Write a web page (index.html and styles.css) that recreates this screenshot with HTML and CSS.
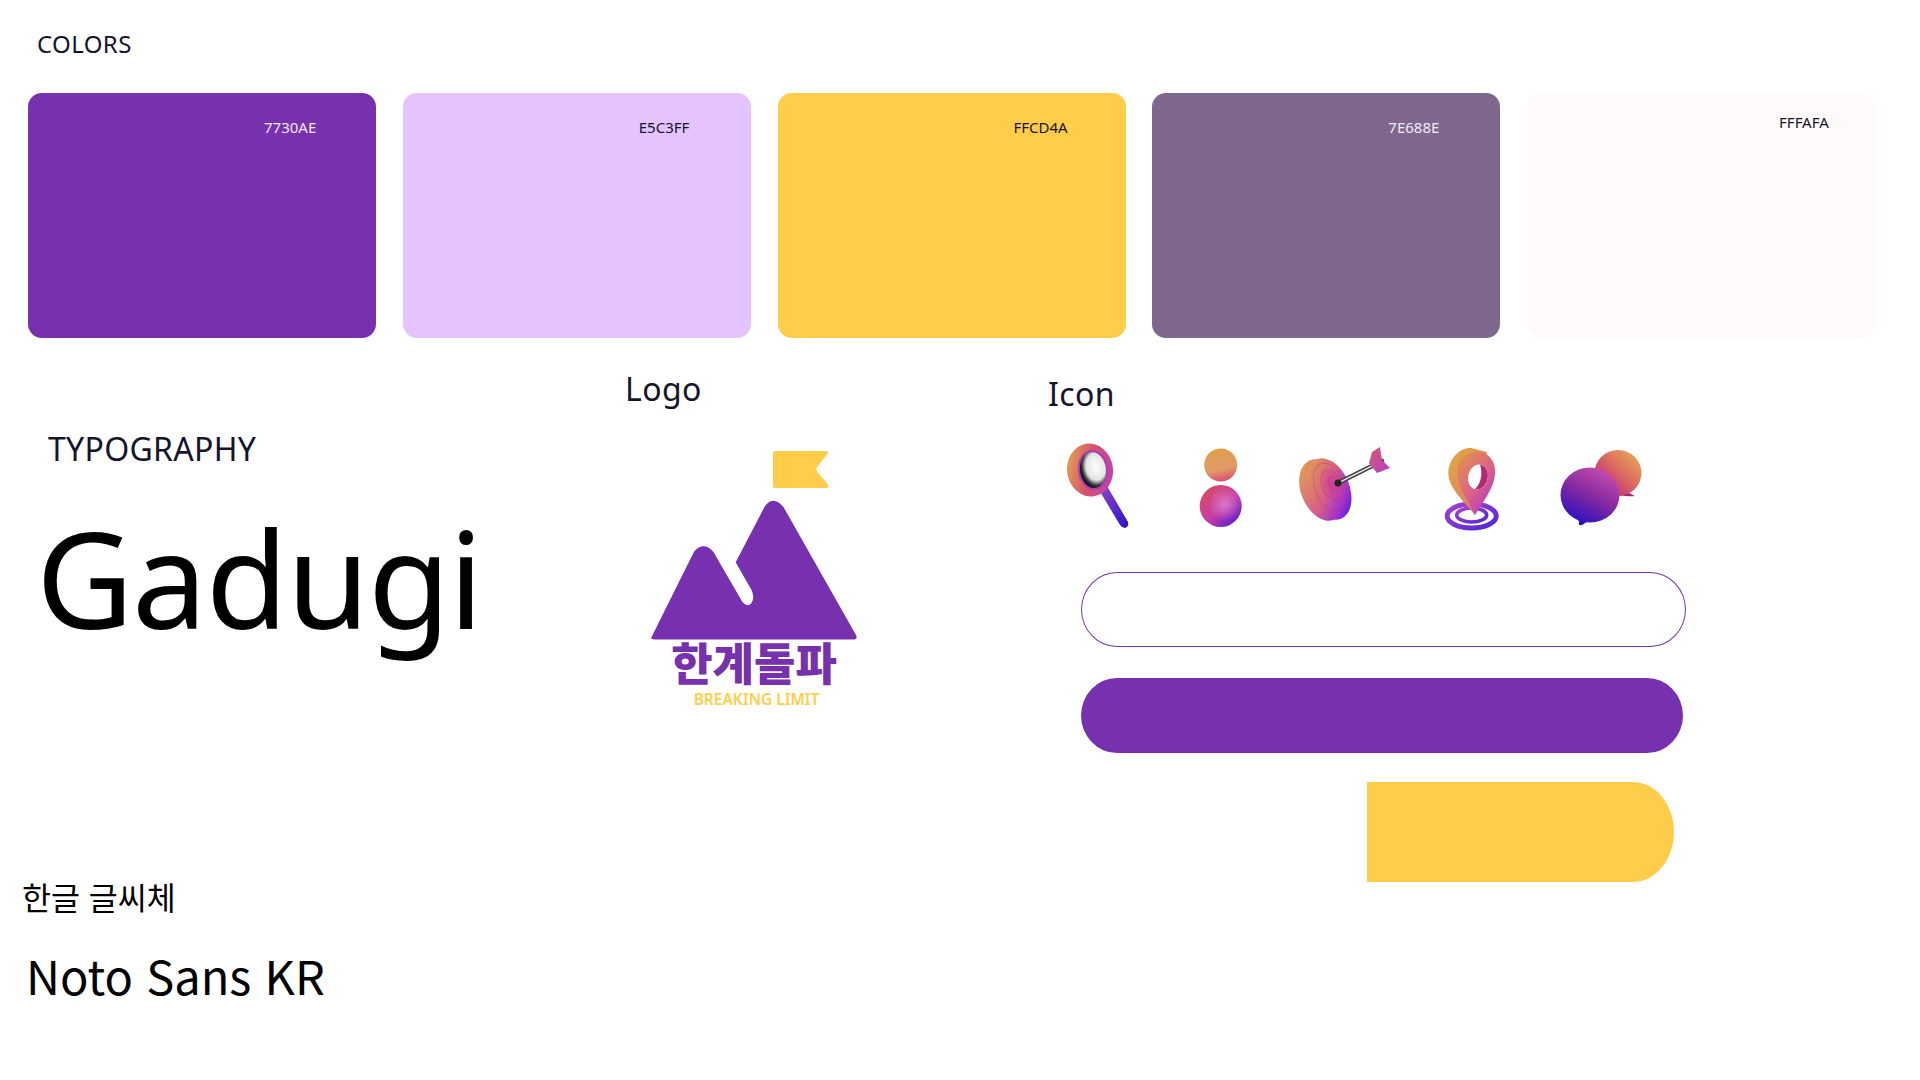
FILE: index.html
```html
<!DOCTYPE html>
<html lang="ko">

<head>
    <meta charset="UTF-8">
    <title>Style Guide</title>
    <link rel="stylesheet" href="styles.css">
</head>

<body>
    <section class="colors">
        <h2 class="colors-title">COLORS</h2>
        <div class="swatches">
            <div class="swatch purple"><span class="code light">7730AE</span></div>
            <div class="swatch lilac"><span class="code">E5C3FF</span></div>
            <div class="swatch yellow"><span class="code">FFCD4A</span></div>
            <div class="swatch grey"><span class="code light">7E688E</span></div>
            <div class="swatch snow"><span class="code raised">FFFAFA</span></div>
        </div>
    </section>

    <section class="lower">
        <div class="type-col">
            <h2 class="type-title">TYPOGRAPHY</h2>
            <div class="type-big">Gadugi</div>
            <div class="type-kr-label">한글 글씨체</div>
            <div class="type-kr">Noto Sans KR</div>
        </div>

        <div class="logo-col">
            <h2 class="heading">Logo</h2>
            <div class="logo">
                <svg class="logo-mark" viewBox="0 0 206 189" width="206" height="189">
                    <path fill="#FFCD4A" d="M124 0H175Q178.500 0 176.500 3L166 16Q164.500 18.300 166 20.600L176.500 33Q178.500 37 175 37H124Q122 37 122 35V2Q122 0 124 0Z"/>
                    <path fill="#7730AE" d="M0.700 185.700L43 100.700Q52.300 90 62.300 100.700L91.300 150.700Q96 157 100.500 152Q104 147 100.500 139L84.700 111.300L114 55Q122.300 44 132.300 55.700L205 184Q207 188.500 203 188.500H3Q-1 188.500 0.700 185.700Z"/>
                </svg>
                <div class="logo-kr">한계돌파</div>
                <div class="logo-en">BREAKING LIMIT</div>
            </div>
        </div>

        <div class="icon-col">
            <h2 class="heading icon-heading">Icon</h2>
            <div class="icons">
                <svg class="icon" viewBox="0 0 100 100" width="100" height="100">
                    <defs>
                        <linearGradient id="ring" x1="0" y1="0.3" x2="1" y2="0.7">
                            <stop offset="0" stop-color="#E4A050"/>
                            <stop offset="0.5" stop-color="#D4506E"/>
                            <stop offset="1" stop-color="#C040B0"/>
                        </linearGradient>
                        <linearGradient id="handle" x1="0" y1="0" x2="1" y2="1">
                            <stop offset="0" stop-color="#9048C8"/>
                            <stop offset="1" stop-color="#3010C8"/>
                        </linearGradient>
                        <radialGradient id="lens" cx="0.62" cy="0.42" r="0.62">
                            <stop offset="0" stop-color="#FFFFFF"/>
                            <stop offset="0.6" stop-color="#E4E4E4"/>
                            <stop offset="0.85" stop-color="#333333"/>
                            <stop offset="1" stop-color="#111111"/>
                        </radialGradient>
                    </defs>
                    <path d="M52 50L60 46L81 82Q82 87 78 88Q75 88 73 85Z" fill="url(#handle)"/>
                    <ellipse cx="43" cy="30" rx="23" ry="26.500" fill="url(#ring)" transform="rotate(-8 43 30)"/>
                    <ellipse cx="46" cy="30" rx="15" ry="20" fill="#A83CB0" transform="rotate(-8 46 30)"/>
                    <ellipse cx="46" cy="30" rx="13" ry="18" fill="url(#lens)" transform="rotate(-8 46 30)"/>
                </svg>

                <svg class="icon" viewBox="0 0 100 100" width="100" height="100">
                    <defs>
                        <linearGradient id="head" x1="0.3" y1="0" x2="0.5" y2="1">
                            <stop offset="0" stop-color="#DFA048"/>
                            <stop offset="0.65" stop-color="#E09A68"/>
                            <stop offset="1" stop-color="#DA5070"/>
                        </linearGradient>
                        <linearGradient id="body" x1="0.1" y1="0.1" x2="0.85" y2="0.95">
                            <stop offset="0" stop-color="#D84A60"/>
                            <stop offset="0.55" stop-color="#C83CA8"/>
                            <stop offset="1" stop-color="#5A1CD0"/>
                        </linearGradient>
                        <radialGradient id="sheen" cx="0.6" cy="0.45" r="0.4">
                            <stop offset="0" stop-color="#E090D0" stop-opacity="0.7"/>
                            <stop offset="1" stop-color="#E090D0" stop-opacity="0"/>
                        </radialGradient>
                    </defs>
                    <circle cx="47.700" cy="25" r="16.500" fill="url(#head)"/>
                    <circle cx="47.700" cy="66" r="21" fill="url(#body)"/>
                    <circle cx="47.700" cy="66" r="21" fill="url(#sheen)"/>
                </svg>

                <svg class="icon" viewBox="0 0 100 100" width="100" height="100">
                    <defs>
                        <linearGradient id="discback" x1="0.1" y1="0" x2="0.7" y2="1">
                            <stop offset="0" stop-color="#E2A448"/>
                            <stop offset="0.6" stop-color="#D86090"/>
                            <stop offset="1" stop-color="#9030D8"/>
                        </linearGradient>
                        <linearGradient id="disc" x1="0.15" y1="0" x2="0.8" y2="1">
                            <stop offset="0" stop-color="#E2A04C"/>
                            <stop offset="0.5" stop-color="#D85C88"/>
                            <stop offset="0.8" stop-color="#A030D0"/>
                            <stop offset="1" stop-color="#4A18E0"/>
                        </linearGradient>
                        <radialGradient id="bull" cx="0.5" cy="0.5" r="0.5">
                            <stop offset="0" stop-color="#C83C98" stop-opacity="0.9"/>
                            <stop offset="1" stop-color="#C83C98" stop-opacity="0"/>
                        </radialGradient>
                        <linearGradient id="fletch" x1="0" y1="0" x2="1" y2="1">
                            <stop offset="0" stop-color="#D85A68"/>
                            <stop offset="1" stop-color="#B040D0"/>
                        </linearGradient>
                    </defs>
                    <ellipse cx="23" cy="50" rx="21" ry="32" fill="url(#discback)" transform="rotate(-22 23 50)"/>
                    <ellipse cx="30" cy="49" rx="20.500" ry="32" fill="url(#disc)" transform="rotate(-22 30 49)"/>
                    <ellipse cx="34" cy="45" rx="13" ry="20" fill="url(#bull)" transform="rotate(-22 34 45)"/>
                    <g fill="none" stroke="#A82C80" stroke-opacity="0.3">
                        <ellipse cx="31" cy="47" rx="15" ry="25" transform="rotate(-22 31 47)"/>
                        <ellipse cx="33" cy="45" rx="10" ry="16" transform="rotate(-22 33 45)"/>
                        <ellipse cx="35" cy="44" rx="5" ry="8" transform="rotate(-22 35 44)"/>
                    </g>
                    <path d="M39 43L83 21" stroke="#3A3A3A" stroke-width="4.500" stroke-linecap="round"/>
                    <path d="M40 42.500L82 21.500" stroke="#DADADA" stroke-width="1.800"/>
                    <circle cx="39" cy="43" r="3.500" fill="#222222"/>
                    <path fill="url(#fletch)" d="M73 12L81 7L83 20L91 28L78 33L70 23Z"/>
                </svg>

                <svg class="icon" viewBox="0 0 100 100" width="100" height="100">
                    <defs>
                        <linearGradient id="pinside" x1="0.2" y1="0" x2="0.9" y2="1">
                            <stop offset="0" stop-color="#E2A448"/>
                            <stop offset="0.65" stop-color="#DA8A58"/>
                            <stop offset="1" stop-color="#D45080"/>
                        </linearGradient>
                        <linearGradient id="pin" x1="0.2" y1="0" x2="0.85" y2="0.9">
                            <stop offset="0" stop-color="#E09050"/>
                            <stop offset="0.55" stop-color="#DC6288"/>
                            <stop offset="1" stop-color="#B438C8"/>
                        </linearGradient>
                        <linearGradient id="pinring" x1="0" y1="0" x2="1" y2="1">
                            <stop offset="0" stop-color="#A840C8"/>
                            <stop offset="1" stop-color="#5028D8"/>
                        </linearGradient>
                    </defs>
                    <ellipse cx="46.700" cy="76" rx="24.500" ry="12" fill="none" stroke="url(#pinring)" stroke-width="5"/>
                    <ellipse cx="46.700" cy="75" rx="15" ry="7" fill="none" stroke="url(#pinring)" stroke-width="3.500"/>
                    <path fill="url(#pinside)" d="M50 75C40 62 23 48 23.300 33C24 16 38 6 48 8.500L62 12L50 75Z"/>
                    <path fill="url(#pin)" d="M50 75C42 58 32 46 32 33C32 19 45 9 57 12C66 15 71 24 70 34C69 48 58 62 50 75Z"/>
                    <ellipse cx="53" cy="37" rx="10" ry="12.500" fill="#FFFFFF" transform="rotate(12 53 37)"/>
                    <path fill="#B02C70" d="M55 24.800C62 26 64.500 34 62 41C60 47 55 50 50 49C56 44 58 33 55 24.800Z"/>
                </svg>

                <svg class="icon" viewBox="0 0 100 100" width="100" height="100">
                    <defs>
                        <linearGradient id="backb" x1="0.95" y1="0.1" x2="0.2" y2="0.9">
                            <stop offset="0" stop-color="#E8A858"/>
                            <stop offset="0.5" stop-color="#DC6A60"/>
                            <stop offset="1" stop-color="#B82878"/>
                        </linearGradient>
                        <linearGradient id="frontb" x1="0.75" y1="0" x2="0.2" y2="1">
                            <stop offset="0" stop-color="#C850B0"/>
                            <stop offset="0.5" stop-color="#8428A0"/>
                            <stop offset="1" stop-color="#2410C4"/>
                        </linearGradient>
                    </defs>
                    <path fill="#A02868" d="M72 50L84 56Q78 57 68 55Z"/>
                    <ellipse cx="67" cy="33" rx="23.500" ry="23" fill="url(#backb)"/>
                    <path fill="#3010B8" d="M26 76L42 78L31 85Q27 86 28 82Z"/>
                    <ellipse cx="39" cy="55" rx="29.500" ry="27.500" fill="url(#frontb)"/>
                </svg>
            </div>
            <div class="bars">
                <div class="bar-outline"></div>
                <div class="bar-fill"></div>
                <div class="bar-half"></div>
            </div>
        </div>
    </section>
</body>

</html>
```

FILE: styles.css
```css
html,
body {
    margin: 0;
    padding: 0;
    width: 100%;
    height: 100%;
    background-color: white;
    font-family: "Noto Sans", "Noto Sans CJK KR", sans-serif;
    overflow: hidden;
}

h2 {
    margin: 0;
    font-weight: 400;
}

.colors {
    padding: 27px 45px 0 28px;
}

.colors-title {
    margin-left: 9px;
    font-size: 24px;
    line-height: 33px;
    letter-spacing: 0.4px;
    color: #14142B;
}

.swatches {
    display: flex;
    gap: 26.800px;
    margin-top: 33px;
}

.swatch {
    box-sizing: border-box;
    width: 348px;
    height: 245px;
    padding: 24px 0 0 236px;
    border-radius: 14px;
}

.swatch.purple {
    background-color: #7730AE;
}

.swatch.lilac {
    background-color: #E5C3FF;
}

.swatch.yellow {
    background-color: #FFCD4A;
}

.swatch.grey {
    background-color: #7E688E;
}

.swatch.snow {
    background-color: #FFFAFA;
}

.code {
    display: block;
    font-size: 15px;
    line-height: 20px;
    color: #14142B;
}

.code.light {
    color: #F3E8FA;
}

.code.raised {
    margin: -5px 0 0 16px;
}

.lower {
    display: flex;
    padding-top: 29px;
}

.type-col {
    width: 625px;
}

.type-title {
    margin: 60px 0 0 48px;
    font-size: 32px;
    line-height: 44px;
    letter-spacing: 0.3px;
    color: #14142B;
}

.type-big {
    margin: 13px 0 0 36px;
    font-size: 134px;
    line-height: 186px;
    letter-spacing: -1.500px;
    color: black;
}

.type-kr-label {
    margin: 203px 0 0 22px;
    font-family: "Noto Sans CJK KR", sans-serif;
    font-size: 31.500px;
    line-height: 46px;
    color: black;
}

.type-kr {
    margin: 21px 0 0 26px;
    font-family: "Noto Sans CJK KR", sans-serif;
    font-size: 47px;
    line-height: 70px;
    color: black;
}

.logo-col {
    width: 423px;
}

.heading {
    font-size: 32px;
    line-height: 44px;
    letter-spacing: 0.4px;
    color: #14142B;
}

.logo {
    width: 206px;
    margin: 40px 0 0 26px;
}

.logo-mark {
    display: block;
}

.logo-kr {
    margin-top: -5px;
    font-family: "Noto Sans CJK KR", sans-serif;
    font-size: 45px;
    font-weight: 900;
    line-height: 54px;
    text-align: center;
    color: #7730AE;
}

.logo-en {
    padding-left: 5px;
    font-size: 15.500px;
    font-weight: 600;
    line-height: 20px;
    text-align: center;
    color: #FFCD4A;
}

.icon-heading {
    margin-top: 5px;
}

.icons {
    display: flex;
    gap: 26px;
    margin: 24px 0 0 -1px;
}

.icon {
    display: block;
    flex: none;
}

.bars {
    display: flex;
    flex-direction: column;
    margin: 32px 0 0 33px;
}

.bar-outline {
    box-sizing: border-box;
    width: 605px;
    height: 75px;
    border: 1.500px solid #7730AE;
    border-radius: 36px / 37.500px;
}

.bar-fill {
    width: 602px;
    height: 75px;
    margin-top: 31px;
    background-color: #7730AE;
    border-radius: 36px / 37.500px;
}

.bar-half {
    width: 307px;
    height: 100px;
    margin: 29px 0 0 286px;
    background-color: #FFCD4A;
    border-radius: 0 41px 41px 0 / 0 50px 50px 0;
}
```
